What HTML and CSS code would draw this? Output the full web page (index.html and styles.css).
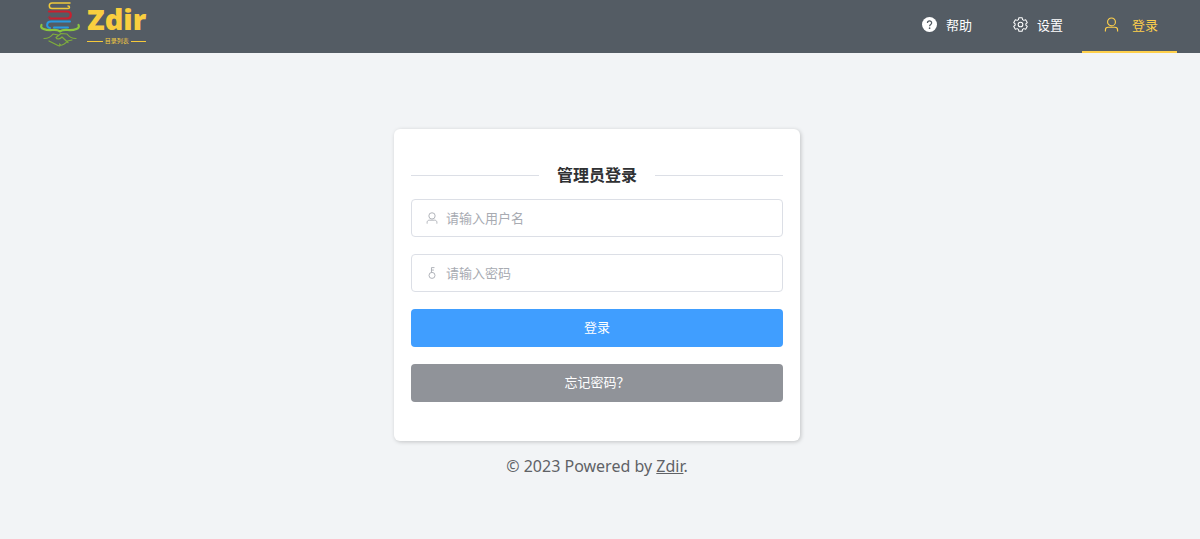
FILE: index.html
```html
<!DOCTYPE html>
<html lang="zh-CN">
<head>
<meta charset="utf-8">
<meta name="viewport" content="width=device-width, initial-scale=1">
<title>Zdir</title>
<link rel="stylesheet" href="styles.css">
</head>
<body>
<svg class="symbols" aria-hidden="true">
  <symbol id="user" viewBox="0 0 16 16">
    <g fill="none" stroke="currentColor" stroke-width="1.2"><circle cx="8" cy="5.2" r="4.2"/><path d="M1.500 15.500v-1.700c0-1.700 1.200-2.900 2.900-2.900h7.200c1.700 0 2.900 1.200 2.900 2.900v1.700"/></g>
  </symbol>
  <symbol id="key" viewBox="0 0 16 16">
    <g fill="none" stroke="currentColor" stroke-width="1.2"><circle cx="8" cy="11.200" r="4"/><path d="M7.300 7.200V.8h4M7.300 4.100h3.200"/></g>
  </symbol>
</svg>
<header class="topbar">
  <a class="brand" href="#">
    <svg class="brand-mark" viewBox="0 0 42 48" aria-hidden="true">
      <g fill="none" stroke-linecap="round" stroke-linejoin="round">
        <path stroke="#f0c93b" stroke-width="1.500" d="M31 3H13c-3.600 0-3.600 5.500 0 5.500h16c2 0 2-2.500 0-2.500"/>
        <path stroke="#c9202f" stroke-width="2.200" d="M10 11.500h18c5 0 5 7 0 7H11"/>
        <path stroke="#c9202f" stroke-width="1" d="M11 16.500c-2 0-2 2 0 2"/>
        <path stroke="#2a9be0" stroke-width="2" d="M31 21.500H12c-5 0-5 6.500-1 6.500M15 27.500h14"/>
        <path stroke="#8cc63f" stroke-width="2.200" d="M2.500 25c-2 3.500 4 5.500 11 5 3-.2 5-.5 7.500 1.500 2.500-2 4.500-1.700 7.500-1.500 7 .5 13-1.500 11-5"/>
        <path stroke="#7fae3c" stroke-width="1.200" d="M5 38.500c4 0 7-1.500 9-4.500l5 1M37 38.500c-4 0-7-1.500-9-4.500l-6-.5-5 4c1 2.500 4 1.500 6-.5l6 5.500M10 41l9 4.500c2 1 3-.5 1.500-1.500M20 45.500c3 0 7-2 8.500-4.500L33 40"/>
      </g>
    </svg>
    <span class="brand-words">
      <span class="brand-name">Zdir</span>
      <span class="brand-caption">目录列表</span>
    </span>
  </a>
  <nav class="menu">
    <a class="menu-item" href="#">
      <span class="menu-icon"><svg class="icon-help" viewBox="0 0 16 16" aria-hidden="true"><circle cx="8" cy="8" r="8" fill="#fff"/><path d="M5.800 6.500c0-3 4.500-3 4.500-.2C10.300 8 8.100 7.900 8.100 9.800" fill="none" stroke="#545c64" stroke-width="1.300"/><circle cx="8.100" cy="11.900" r=".9" fill="#545c64"/></svg></span>
      <span>帮助</span>
    </a>
    <a class="menu-item" href="#">
      <span class="menu-icon"><svg class="icon-gear" viewBox="0 0 16 16" aria-hidden="true"><g fill="none" stroke="currentColor" stroke-width="1.100" stroke-linejoin="round"><path d="M6.300.8h3.400l.5 2 1.300.8 2-.6 1.700 2.900-1.500 1.400v1.400l1.500 1.400-1.700 2.900-2-.6-1.300.8-.5 2H6.300l-.5-2-1.300-.8-2 .6L.8 10.100l1.500-1.400V7.300L.8 5.900 2.500 3l2 .6 1.300-.8z"/><circle cx="8" cy="8" r="2.500"/></g></svg></span>
      <span>设置</span>
    </a>
    <a class="menu-item menu-item-active" href="#" aria-current="page">
      <span class="menu-icon"><svg class="icon-user"><use href="#user"/></svg></span>
      <span>登录</span>
    </a>
  </nav>
</header>
<main class="page">
  <form class="card">
    <h1 class="title">管理员登录</h1>
    <label class="field">
      <svg class="field-icon" aria-hidden="true"><use href="#user"/></svg>
      <input class="field-input" type="text" placeholder="请输入用户名" aria-label="用户名">
    </label>
    <label class="field">
      <svg class="field-icon" aria-hidden="true"><use href="#key"/></svg>
      <input class="field-input" type="password" placeholder="请输入密码" aria-label="密码">
    </label>
    <button class="button button-primary" type="submit">登录</button>
    <button class="button button-info" type="button">忘记密码？</button>
  </form>
  <footer class="footer">© 2023 Powered by <a class="footer-link" href="#">Zdir</a>.</footer>
</main>
</body>
</html>
```
FILE: styles.css
```css
* {
  box-sizing: border-box;
}

body {
  margin: 0;
  min-height: 100vh;
  background: #f2f4f6;
  color: #303133;
  font-family: "Noto Sans", "Noto Sans CJK SC", sans-serif;
  font-size: 13px;
}

.symbols {
  display: none;
}

.topbar {
  display: flex;
  justify-content: space-between;
  height: 53px;
  padding: 0 23px 0 39px;
  background: #545c64;
}

.brand {
  display: flex;
  gap: 6px;
  color: #f9ce3f;
  text-decoration: none;
}

.brand-mark {
  width: 42px;
  height: 48px;
}

.brand-words {
  display: flex;
  flex-direction: column;
  padding-top: 3px;
}

.brand-name {
  font-family: "Open Sans", sans-serif;
  font-size: 29px;
  font-weight: 800;
  line-height: 31px;
}

.brand-caption {
  display: flex;
  align-items: center;
  gap: 2px;
  font-size: 6px;
  line-height: 14px;
}

.brand-caption::before,
.brand-caption::after {
  content: "";
  flex: 1;
  height: 1px;
  min-width: 15px;
  background: #f5c93b;
}

.menu {
  display: flex;
}

.menu-item {
  display: flex;
  align-items: center;
  gap: 4px;
  height: 53px;
  padding: 0 19px 3px 18px;
  border-bottom: 2px solid transparent;
  color: #fff;
  text-decoration: none;
}

.menu-item-active {
  gap: 8px;
  border-bottom-color: #ffd04b;
  color: #ffd04b;
}

.menu-icon {
  display: flex;
  justify-content: center;
  width: 24px;
}

.icon-help,
.icon-gear,
.icon-user {
  width: 15px;
  height: 15px;
}

.page {
  display: flex;
  flex-direction: column;
  align-items: center;
  gap: 13px;
  padding: 76px 22px 24px 16px;
}

.card {
  display: flex;
  flex-direction: column;
  gap: 17px;
  width: 100%;
  max-width: 406px;
  padding: 35px 17px 39px;
  border-radius: 6px;
  background: #fff;
  box-shadow: 1px 1px 4px rgba(0, 0, 0, 0.2);
}

.title {
  display: flex;
  align-items: center;
  gap: 18px;
  margin: 0 0 -5px;
  font-size: 16px;
  font-weight: 600;
  line-height: 23px;
}

.title::before,
.title::after {
  content: "";
  flex: 1;
  height: 1px;
  background: #dcdfe6;
}

.field {
  display: flex;
  align-items: center;
  gap: 8px;
  height: 38px;
  padding: 0 14px;
  border: 1px solid #dcdfe6;
  border-radius: 4px;
  color: #a8abb2;
}

.field-icon {
  width: 12px;
  height: 12px;
}

.field-input {
  flex: 1;
  min-width: 0;
  padding: 0;
  border: 0;
  outline: 0;
  background: none;
  color: #606266;
  font: inherit;
}

.field-input::placeholder {
  color: #a8abb2;
}

.button {
  height: 38px;
  padding: 0 0 3px;
  border: 0;
  border-radius: 4px;
  color: #fff;
  font: inherit;
  cursor: pointer;
}

.button-primary {
  background: #409eff;
}

.button-info {
  background: #909399;
}

.footer {
  color: #606266;
  font-size: 16px;
  line-height: 24px;
}

.footer-link {
  color: inherit;
}
```
